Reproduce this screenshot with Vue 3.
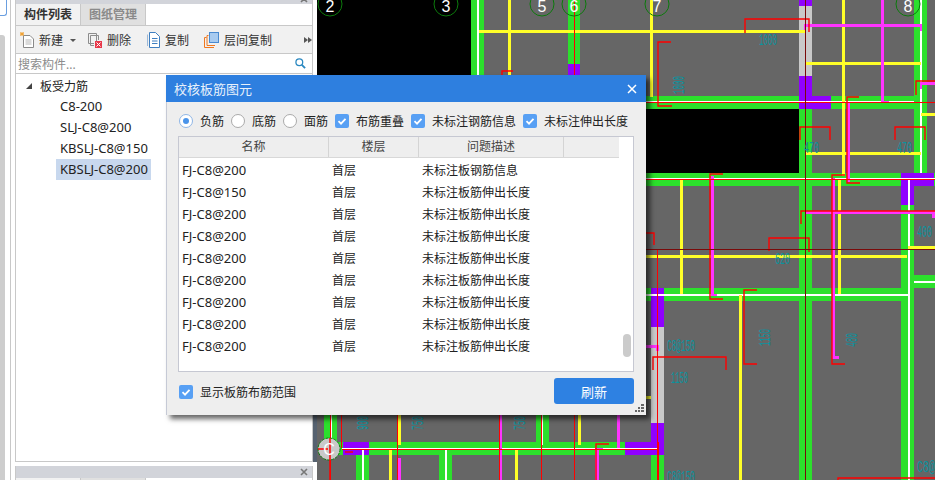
<script setup>
const rows = [
  ['FJ-C8@200', '首层', '未标注板钢筋信息'],
  ['FJ-C8@150', '首层', '未标注板筋伸出长度'],
  ['FJ-C8@200', '首层', '未标注板筋伸出长度'],
  ['FJ-C8@200', '首层', '未标注板筋伸出长度'],
  ['FJ-C8@200', '首层', '未标注板筋伸出长度'],
  ['FJ-C8@200', '首层', '未标注板筋伸出长度'],
  ['FJ-C8@200', '首层', '未标注板筋伸出长度'],
  ['FJ-C8@200', '首层', '未标注板筋伸出长度'],
  ['FJ-C8@200', '首层', '未标注板筋伸出长度'],
]
const treeItems = ['C8-200', 'SLJ-C8@200', 'KBSLJ-C8@150', 'KBSLJ-C8@200']

const GREEN = '#2ce02c'
const PURPLE = '#9000ff'
const GREY = '#c9c9c9'
const YELLOW = '#ffff28'
const PINK = '#ff33ff'
const WHITE = '#ffffff'

// x, y, w, h, colour - drawing coordinates are the window's own pixels
const fills = [
  [317, 0, 154, 110, '#000'],
  [646, 109, 153, 64, '#000'],
  // beams
  [471, 0, 13, 80, GREEN],
  [568, 0, 12, 64, GREEN],
  [568, 64, 12, 16, PURPLE],
  [646, 96, 270, 13, GREEN],
  [646, 173, 289, 13, GREEN],
  [646, 288, 268, 13, GREEN],
  [914, 0, 13, 173, GREEN],
  [799, 0, 13, 6, PURPLE],
  [799, 6, 13, 70, GREY],
  [799, 76, 13, 33, PURPLE],
  [799, 96, 32, 13, PURPLE],
  [799, 109, 13, 371, GREEN],
  [901, 173, 13, 307, GREEN],
  [901, 173, 13, 32, PURPLE],
  [901, 173, 33, 13, PURPLE],
  [914, 275, 21, 13, GREEN],
  [651, 288, 13, 39, PURPLE],
  [651, 327, 13, 96, GREY],
  [651, 423, 13, 32, PURPLE],
  [651, 455, 13, 25, GREEN],
  [324, 415, 13, 30, GREEN],
  [536, 415, 13, 30, GREEN],
  [324, 442, 340, 13, GREEN],
  [343, 442, 26, 13, PURPLE],
  [625, 442, 39, 13, PURPLE],
  [356, 455, 13, 25, GREEN],
  [439, 455, 13, 25, GREEN],
  // beam centre lines
  [477, 0, 2, 80, WHITE],
  [646, 101, 268, 1, WHITE],
  [646, 178, 289, 1, WHITE],
  [646, 294, 262, 2, WHITE],
  [914, 281, 21, 2, WHITE],
  [920, 0, 2, 173, WHITE],
  [908, 178, 2, 302, WHITE],
  [342, 448, 316, 1, WHITE],
  [330, 415, 2, 30, WHITE],
  [362, 450, 2, 30, WHITE],
  [445, 450, 2, 30, WHITE],
  [542, 415, 1, 30, WHITE],
  // yellow bars
  [479, 30, 326, 3, YELLOW],
  [508, 0, 3, 75, YELLOW],
  [650, 0, 3, 97, YELLOW],
  [842, 0, 3, 176, YELLOW],
  [806, 62, 115, 3, YELLOW],
  [806, 152, 115, 3, YELLOW],
  [921, 113, 14, 3, YELLOW],
  [680, 180, 3, 114, YELLOW],
  [838, 180, 3, 114, YELLOW],
  [646, 255, 261, 3, YELLOW],
  [908, 246, 27, 3, YELLOW],
  [739, 295, 3, 185, YELLOW],
  [646, 396, 5, 3, YELLOW],
  [398, 415, 3, 30, YELLOW],
  [578, 415, 3, 30, YELLOW],
  [389, 450, 3, 30, YELLOW],
  [515, 450, 3, 30, YELLOW],
  // pink bars
  [805, 24, 116, 3, PINK],
  [804, 24, 2, 6, PINK],
  [920, 24, 2, 7, PINK],
  [881, 0, 3, 103, PINK],
  [881, 101, 8, 2, PINK],
  [847, 102, 3, 80, PINK],
  [920, 82, 15, 3, PINK],
  [920, 82, 2, 7, PINK],
  [711, 176, 3, 119, PINK],
  [711, 294, 6, 2, PINK],
  [805, 211, 130, 3, PINK],
  [932, 211, 3, 7, PINK],
  [832, 178, 3, 178, PINK],
  [832, 356, 7, 3, PINK],
  [646, 345, 11, 3, PINK],
  [656, 345, 3, 6, PINK],
  [398, 458, 3, 22, PINK],
  [499, 415, 3, 65, PINK],
  [617, 415, 3, 33, PINK],
  [595, 448, 4, 32, PINK],
  [595, 448, 8, 2, PINK],
]

// red marker outlines
const redPaths = [
  'M745 33V19H809V32',
  'M671 42H658V106H672',
  'M800 140V127H830V140',
  'M895 140V127H925V140',
  'M859 97H847V183H860',
  'M723 174H710V299H723',
  'M845 175H832V364H845',
  'M757 290H744V364H757',
  'M916 95V81H935',
  'M801 224V211H935',
  'M653 370V357H726V370',
  'M769 251V238H809V252',
  'M646 233H654V245',
  'M838 480V478H935',
  'M502 75V71H513',
  'M596 480V444H609',
  'M345 452H353',
]
const redLines = [
  [646, 102, 289, 1],
  [646, 179, 289, 1],
  [574, 0, 1, 75],
  [657, 250, 1, 230],
  [342, 449, 316, 1],
  [341, 415, 1, 33],
  [397, 415, 1, 65],
  [499, 415, 1, 65],
  [541, 415, 1, 65],
  [574, 415, 1, 65],
  [658, 442, 1, 38],
  [330, 415, 1, 65],
]

const axes = [
  { n: '2', x: 330, y: 4 },
  { n: '3', x: 446, y: 4 },
  { n: '5', x: 542, y: 4 },
  { n: '6', x: 574, y: 4 },
  { n: '7', x: 657, y: 4 },
  { n: '8', x: 908, y: 4 },
]

const notes = [
  { t: '1000', x: 759, y: 45, w: 18 },
  { t: '470', x: 804, y: 153, w: 15 },
  { t: '470', x: 897, y: 153, w: 15 },
  { t: '400', x: 917, y: 237, w: 15 },
  { t: '620', x: 775, y: 264, w: 15 },
  { t: 'C8@150', x: 667, y: 351, w: 28 },
  { t: 'C8@150', x: 667, y: 482, w: 28 },
  { t: '1150', x: 671, y: 383, w: 17 },
  { t: 'C8@', x: 917, y: 472, w: 18 },
]
const sideNotes = [
  { t: '1000', x: 684, y: 94, w: 18 },
  { t: '1150', x: 770, y: 346, w: 17 },
  { t: '480', x: 857, y: 347, w: 14 },
  { t: '900', x: 368, y: 430, w: 14 },
  { t: '750', x: 423, y: 430, w: 14 },
  { t: '750', x: 525, y: 430, w: 14 },
]
</script>

<template>
  <div class="page">
    <div class="rail">
      <div class="rail-tab"></div>
      <div class="rail-bar"></div>
    </div>

    <div class="side">
      <section class="panel">
        <div class="panel-head">
          <svg class="panel-x" width="8" height="8" viewBox="0 0 8 8">
            <path d="M1 1L7 7M7 1L1 7" stroke="#777" stroke-width="1.6" />
          </svg>
        </div>
        <div class="tabs">
          <span class="tab active">构件列表</span>
          <span class="tab">图纸管理</span>
        </div>
        <div class="toolbar">
          <span class="tool tool-new">
            <svg width="16" height="16" viewBox="0 0 16 16">
              <path d="M4.5 3.5H11L14.5 7V15.5H4.5Z" fill="#fff" stroke="#8a8a8a" />
              <path d="M6.5 8H12.5M6.5 10H12.5M6.5 12H12.5" stroke="#b5b5b5" />
              <path d="M1 2H5M3 0V4M1 0.5L5 3.5M5 0.5L1 3.5" stroke="#f0a030" />
            </svg>
            新建
          </span>
          <span class="tool-caret"></span>
          <span class="tool tool-del">
            <svg width="16" height="16" viewBox="0 0 16 16">
              <path d="M1.5 1.5H9.5V10M1.5 1.5V11.5H7" fill="none" stroke="#8c8c8c" />
              <path d="M3.5 3.5H11.5V8M3.5 3.5V13.5H7" fill="none" stroke="#8c8c8c" />
              <rect x="8" y="9" width="7" height="7" fill="#e8384a" />
              <path d="M9.5 10.5L13.5 14.5M13.5 10.5L9.5 14.5" stroke="#fff" />
            </svg>
            删除
          </span>
          <span class="tool tool-copy">
            <svg width="13" height="16" viewBox="0 0 13 16">
              <path d="M2.5 0.5H8.5L12.5 4.5V15.5H2.5Z" fill="#fff" stroke="#3f7fc0" />
              <path d="M0.5 2.5V14" stroke="#9bb8d8" />
              <path d="M5 6.5H10.5M5 9H10.5M5 11.5H10.5" stroke="#3f7fc0" />
            </svg>
            复制
          </span>
          <span class="tool tool-floor">
            <svg width="15" height="16" viewBox="0 0 15 16">
              <path d="M0.5 15.5V5.5H2.5M0.5 15.5H10" fill="none" stroke="#f07820" />
              <path d="M3 13.5V3.5H4.5M3 13.5H11" fill="none" stroke="#f07820" />
              <rect x="5.5" y="0.5" width="9" height="10" fill="#a8cbf0" stroke="#4a8ad0" />
            </svg>
            层间复制
          </span>
          <span class="tool-more">
            <i></i><i></i>
          </span>
        </div>
        <div class="search">
          <span class="search-hint">搜索构件...</span>
          <svg class="search-icon" width="11" height="11" viewBox="0 0 12 12">
            <circle cx="4.7" cy="4.7" r="3.7" fill="none" stroke="#2a88c0" stroke-width="1.4" />
            <path d="M7.5 7.5L11 11" stroke="#2a88c0" stroke-width="2" />
          </svg>
        </div>
        <div class="tree">
          <div class="tree-root"><span class="tree-caret"></span>板受力筋</div>
          <div
            v-for="(item, i) in treeItems"
            :key="item"
            class="tree-item"
            :class="{ selected: i === treeItems.length - 1 }"
          >
            <span>{{ item }}</span>
          </div>
        </div>
      </section>

      <section class="panel panel-low">
        <div class="panel-head">
          <svg class="panel-x" width="8" height="8" viewBox="0 0 8 8">
            <path d="M1 1L7 7M7 1L1 7" stroke="#777" stroke-width="1.6" />
          </svg>
        </div>
        <div class="tabs tabs-low">
          <span class="tab active"></span>
          <span class="tab"></span>
        </div>
      </section>
    </div>

    <div class="gutter"><div class="gutter-dark"></div></div>

    <svg class="cad" viewBox="317 0 618 480" width="618" height="480">
      <rect x="317" y="0" width="618" height="480" fill="#666" />
      <rect v-for="(r, i) in fills" :key="'f' + i" :x="r[0]" :y="r[1]" :width="r[2]" :height="r[3]" :fill="r[4]" />
      <rect v-for="(r, i) in redLines" :key="'r' + i" :x="r[0]" :y="r[1]" :width="r[2]" :height="r[3]" fill="#f00" />
      <path v-for="(d, i) in redPaths" :key="'p' + i" :d="d" fill="none" stroke="#f00" stroke-width="1.4" />
      <path d="M805.5 0V480M646 249.5H935" stroke="#7a0a0a" fill="none" />

      <g v-for="a in axes" :key="a.n">
        <circle :cx="a.x" :cy="a.y" r="12" fill="none" stroke="#0c7a0c" />
        <text :x="a.x" y="12" class="axis-no">{{ a.n }}</text>
      </g>
      <circle cx="329" cy="449" r="11" fill="#c9c9c9" stroke="#0c7a0c" stroke-dasharray="3 1" />
      <path d="M318 449H328M330 438V480" stroke="#f00" stroke-width="1.5" />
      <text x="329" y="455" class="axis-no">C</text>

      <text v-for="(n, i) in notes" :key="'n' + i" :x="n.x" :y="n.y" :textLength="n.w" lengthAdjust="spacingAndGlyphs" class="note">{{ n.t }}</text>
      <text
        v-for="(n, i) in sideNotes"
        :key="'s' + i"
        :transform="`translate(${n.x} ${n.y}) rotate(-90)`"
        :textLength="n.w"
        lengthAdjust="spacingAndGlyphs"
        class="note"
      >{{ n.t }}</text>
    </svg>

    <div class="dialog">
      <header class="dialog-title">
        <span>校核板筋图元</span>
        <svg width="10" height="10" viewBox="0 0 10 10">
          <path d="M1 1L9 9M9 1L1 9" stroke="#fff" stroke-width="1.5" />
        </svg>
      </header>

      <div class="options">
        <label class="opt opt-radio"><span class="radio on"></span>负筋</label>
        <label class="opt opt-radio"><span class="radio"></span>底筋</label>
        <label class="opt opt-radio"><span class="radio"></span>面筋</label>
        <label class="opt opt-check">
          <span class="check"><svg width="14" height="14" viewBox="0 0 14 14"><path d="M3.5 7.2L6 9.6L10.5 4.8" fill="none" stroke="#fff" stroke-width="1.8" /></svg></span>布筋重叠
        </label>
        <label class="opt opt-check">
          <span class="check"><svg width="14" height="14" viewBox="0 0 14 14"><path d="M3.5 7.2L6 9.6L10.5 4.8" fill="none" stroke="#fff" stroke-width="1.8" /></svg></span>未标注钢筋信息
        </label>
        <label class="opt opt-check">
          <span class="check"><svg width="14" height="14" viewBox="0 0 14 14"><path d="M3.5 7.2L6 9.6L10.5 4.8" fill="none" stroke="#fff" stroke-width="1.8" /></svg></span>未标注伸出长度
        </label>
      </div>

      <div class="table">
        <div class="thead">
          <span class="th th-name">名称</span>
          <span class="th th-floor">楼层</span>
          <span class="th th-desc">问题描述</span>
          <span class="th-fill"></span>
        </div>
        <div class="tbody">
          <div v-for="(r, i) in rows" :key="i" class="tr">
            <span class="td td-name">{{ r[0] }}</span>
            <span class="td td-floor">{{ r[1] }}</span>
            <span class="td">{{ r[2] }}</span>
          </div>
          <div class="thumb"></div>
        </div>
      </div>

      <footer class="dialog-foot">
        <label class="opt">
          <span class="check"><svg width="14" height="14" viewBox="0 0 14 14"><path d="M3.5 7.2L6 9.6L10.5 4.8" fill="none" stroke="#fff" stroke-width="1.8" /></svg></span>显示板筋布筋范围
        </label>
        <button class="refresh">刷新</button>
      </footer>

      <svg class="grip" width="9" height="8" viewBox="0 0 9 8">
        <path d="M6 0h3v2H6zM3 3h2v2H3zM6 3h3v2H6zM0 6h2v2H0zM3 6h2v2H3zM6 6h3v2H6z" fill="#666" />
      </svg>
    </div>
  </div>
</template>

<style>
html, body {
  margin: 0;
  overflow: hidden;
  background: #fff;
}
</style>

<style scoped>
.page {
  position: relative;
  display: flex;
  width: 935px;
  height: 480px;
  overflow: hidden;
  background: #fff;
  color: #222;
  font-family: "Noto Sans", "Noto Sans CJK SC", sans-serif;
  font-size: 12px;
}

.rail {
  flex: none;
  width: 10px;
  margin-right: 4px;
  border-right: 1px solid #c8c8c8;
}
.rail-tab {
  width: 6px;
  height: 15px;
  border: 1px solid #6a9fe0;
  border-left: 0;
  border-top: 0;
  border-bottom-right-radius: 3px;
  margin-bottom: 19px;
}
.rail-bar {
  width: 5px;
  height: 445px;
  background: #cdcdcd;
  border-top-right-radius: 3px;
}

.side {
  flex: none;
  width: 298px;
  display: flex;
  flex-direction: column;
  gap: 4px;
}
.panel {
  flex: 1;
  display: flex;
  flex-direction: column;
  border-left: 1px solid #c8c8c8;
  border-right: 1px solid #c8c8c8;
  border-bottom: 1px solid #c8c8c8;
}
.panel-low {
  flex: none;
  height: 14px;
  border-bottom: 0;
}
.panel-head {
  flex: none;
  height: 4px;
  background: #d2d4da;
  position: relative;
  overflow: hidden;
}
.panel-low .panel-head {
  height: 12px;
}
.panel-x {
  position: absolute;
  right: 4px;
  top: -5px;
}
.panel-low .panel-x {
  top: 2px;
}

.tabs {
  flex: none;
  display: flex;
  height: 22px;
  border-bottom: 1px solid #c8c8c8;
  box-sizing: border-box;
}
.tabs-low {
  height: 2px;
  border-bottom: 0;
}
.tab {
  width: 65px;
  box-sizing: border-box;
  border-right: 1px solid #c8c8c8;
  background: #e0e0e0;
  color: #8a8a8a;
  font-weight: 700;
  text-align: center;
  line-height: 21px;
}
.tab.active {
  background: #f2f2f2;
  color: #333;
}

.toolbar {
  flex: none;
  position: relative;
  display: flex;
  align-items: center;
  height: 28px;
  box-sizing: border-box;
  padding-left: 3px;
  background: #f1f1f1;
  border-bottom: 1px solid #c8c8c8;
  color: #333;
}
.tool {
  display: flex;
  align-items: center;
  gap: 4px;
}
.tool-new { width: 50px; }
.tool-del { width: 60px; }
.tool-copy { width: 57px; gap: 5px; }
.tool-floor { width: 100px; gap: 5px; }
.tool-caret {
  width: 0;
  height: 0;
  margin: 2px 11px 0 1px;
  border-left: 3px solid transparent;
  border-right: 3px solid transparent;
  border-top: 3px solid #555;
}
.tool-more {
  display: flex;
}
.tool-more i {
  width: 0;
  height: 0;
  border-top: 3px solid transparent;
  border-bottom: 3px solid transparent;
  border-left: 4px solid #555;
}

.search {
  flex: none;
  display: flex;
  align-items: center;
  justify-content: space-between;
  height: 20px;
  box-sizing: border-box;
  padding: 0 6px 0 2px;
  border-bottom: 1px solid #c8c8c8;
}
.search-hint {
  color: #8c8c8c;
}

.tree {
  flex: 1;
  padding-top: 1px;
}
.tree-root {
  display: flex;
  align-items: center;
  height: 21px;
  padding-left: 10px;
  gap: 8px;
}
.tree-caret {
  width: 0;
  height: 0;
  border-bottom: 6px solid #444;
  border-left: 6px solid transparent;
}
.tree-item {
  height: 21px;
  padding-left: 44px;
  font-size: 13px;
  line-height: 21px;
  box-sizing: border-box;
}
.tree-item span {
  display: inline-block;
  padding: 0 3px 0 4px;
  margin-left: -4px;
}
.tree-item.selected span {
  background: #c8d8ee;
}

.gutter {
  flex: none;
  width: 4px;
}
.gutter-dark {
  width: 4px;
  height: 47px;
  margin-top: 415px;
  background: #566270;
}
.cad {
  flex: none;
  display: block;
}
.axis-no {
  fill: #fff;
  font-size: 16px;
  font-family: "Liberation Sans", sans-serif;
  text-anchor: middle;
}
.note {
  fill: #0b929e;
  font-size: 16px;
  font-family: "Liberation Mono", monospace;
}

.dialog {
  position: absolute;
  left: 166px;
  top: 75px;
  width: 480px;
  height: 340px;
  display: flex;
  flex-direction: column;
  box-sizing: border-box;
  background: #eee;
  border-left: 1px solid #c6cad6;
  box-shadow: 4px 4px 5px rgba(0, 0, 0, 0.6);
}
.dialog-title {
  flex: none;
  display: flex;
  align-items: center;
  justify-content: space-between;
  height: 27px;
  margin-left: -1px;
  padding: 0 9px 0 8px;
  background: #2e7fdf;
  color: #e8f1fb;
  font-size: 13px;
}
.options {
  flex: none;
  display: flex;
  align-items: center;
  height: 34px;
  padding: 4px 0 0 12px;
  box-sizing: border-box;
}
.opt {
  display: flex;
  align-items: center;
  gap: 7px;
  white-space: nowrap;
}
.opt-radio { width: 52px; }
.opt-check { margin-right: 7px; }
.radio {
  flex: none;
  position: relative;
  width: 12px;
  height: 12px;
  border: 1px solid #aaa;
  border-radius: 50%;
  background: #fff;
}
.radio.on {
  border-color: #8fb6e6;
}
.radio.on::after {
  content: "";
  position: absolute;
  left: 3px;
  top: 3px;
  width: 6px;
  height: 6px;
  border-radius: 50%;
  background: #4a94ea;
}
.check {
  flex: none;
  width: 14px;
  height: 14px;
  border-radius: 2px;
  background: #58a0f4;
}
.check svg {
  display: block;
}

.table {
  flex: none;
  height: 236px;
  margin: 0 12px 0 11px;
  box-sizing: border-box;
  border: 1px solid #c6c8d2;
  background: #fff;
  display: flex;
  flex-direction: column;
}
.thead {
  flex: none;
  display: flex;
  height: 21px;
  width: 440px;
  background: #eee;
  border-bottom: 1px solid #d8d8d8;
  box-sizing: border-box;
  text-align: center;
  line-height: 20px;
  color: #444;
}
.th {
  box-sizing: border-box;
  border-right: 1px solid #d4d4d4;
}
.th-name { width: 150px; }
.th-floor { width: 90px; }
.th-desc { width: 145px; }
.th-fill { flex: 1; }
.tbody {
  position: relative;
  flex: 1;
  padding-top: 1px;
}
.tr {
  display: flex;
  align-items: baseline;
  height: 22px;
  line-height: 22px;
  padding-left: 3px;
}
.td-name { width: 150px; font-size: 13px; }
.td-floor { width: 90px; }
.thumb {
  position: absolute;
  left: 444px;
  top: 176px;
  width: 8px;
  height: 23px;
  border-radius: 4px;
  background: #cbcbcb;
}

.dialog-foot {
  flex: 1;
  display: flex;
  align-items: flex-start;
  justify-content: space-between;
  padding: 6px 12px 0 12px;
}
.dialog-foot .opt {
  margin-top: 5px;
}
.refresh {
  width: 80px;
  height: 26px;
  border: 0;
  border-radius: 3px;
  background: #2e81e2;
  color: #fff;
  font: inherit;
  font-size: 13px;
}
.grip {
  position: absolute;
  right: 2px;
  bottom: 3px;
}
</style>
